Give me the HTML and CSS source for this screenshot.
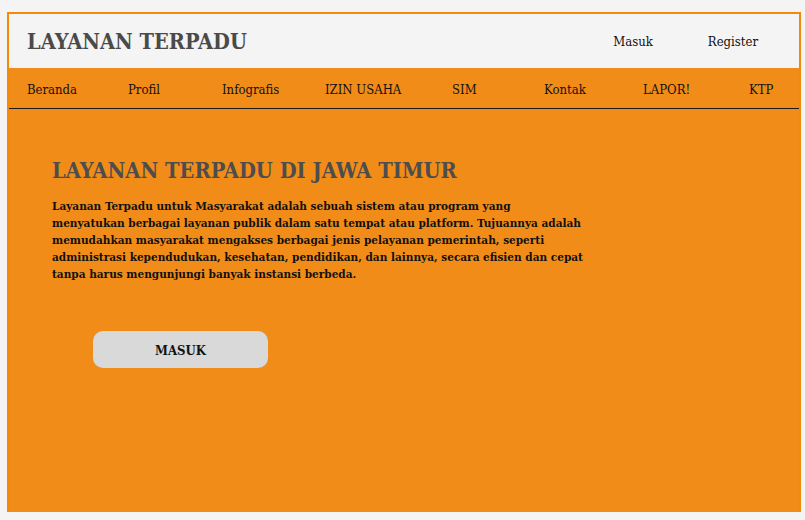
FILE: index.html
```html
<!DOCTYPE html>
<html lang="id">
<head>
<meta charset="utf-8">
<title>Layanan Terpadu</title>
<link rel="stylesheet" href="styles.css">
</head>
<body>
<div class="frame">
  <header class="top">
    <h1 class="brand">LAYANAN TERPADU</h1>
    <div class="auth">
      <a class="auth-link" href="#">Masuk</a>
      <a class="auth-link" href="#">Register</a>
    </div>
  </header>
  <nav class="menu">
    <a href="#">Beranda</a>
    <a href="#">Profil</a>
    <a href="#">Infografis</a>
    <a href="#">IZIN USAHA</a>
    <a href="#">SIM</a>
    <a href="#">Kontak</a>
    <a href="#">LAPOR!</a>
    <a href="#">KTP</a>
  </nav>
  <main class="hero">
    <h2 class="hero-title">LAYANAN TERPADU DI JAWA TIMUR</h2>
    <p class="hero-text">Layanan Terpadu untuk Masyarakat adalah sebuah sistem atau program yang<br>menyatukan berbagai layanan publik dalam satu tempat atau platform. Tujuannya adalah<br>memudahkan masyarakat mengakses berbagai jenis pelayanan pemerintah, seperti<br>administrasi kependudukan, kesehatan, pendidikan, dan lainnya, secara efisien dan cepat<br>tanpa harus mengunjungi banyak instansi berbeda.</p>
    <button class="btn">MASUK</button>
  </main>
</div>
</body>
</html>
```
FILE: styles.css
```css
* { box-sizing: border-box; }
html, body { margin: 0; padding: 0; }
body {
  background: #f4f4f4;
  font-family: "DejaVu Serif Condensed", "DejaVu Serif", serif;
  font-stretch: condensed;
  padding: 12px 4px 8px 7px;
}
a { color: #111; text-decoration: none; }
.frame {
  border: 2px solid #f5890a;
  border-bottom: 0;
  height: 500px;
  display: flex;
  flex-direction: column;
  background: #f28c18;
}
.top {
  height: 54px;
  background: #f4f4f4;
  display: flex;
  align-items: center;
  justify-content: space-between;
  padding: 1px 0 0 18px;
}
.brand {
  margin: 0;
  font-size: 21.6px;
  font-weight: bold;
  color: #4a4a4a;
}
.auth { display: flex; gap: 55px; margin-right: 41px; }
.auth-link { font-size: 13px; }
.menu {
  height: 41px;
  background: #f28c18;
  border-bottom: 1px solid #1a1a1a;
  display: grid;
  grid-template-columns: 101px 94px 103px 127px 92px 99px 106px auto;
  align-items: center;
  padding: 2px 0 0 18px;
  font-size: 13px;
}
.hero {
  flex: 1;
  padding: 49px 0 0 43px;
}
.hero-title {
  margin: 0;
  font-size: 21.7px;
  font-weight: bold;
  color: #4d4d4d;
}
.hero-text {
  margin: 15px 0 0;
  font-size: 11.7px;
  font-weight: bold;
  line-height: 17px;
  color: #111;
}
.btn {
  margin: 48px 0 0 41px;
  width: 175px;
  height: 37px;
  padding-top: 2px;
  border: 0;
  border-radius: 10px;
  background: #d9d9d9;
  font-family: inherit;
  font-stretch: condensed;
  font-weight: bold;
  font-size: 13px;
  color: #111;
}
```
